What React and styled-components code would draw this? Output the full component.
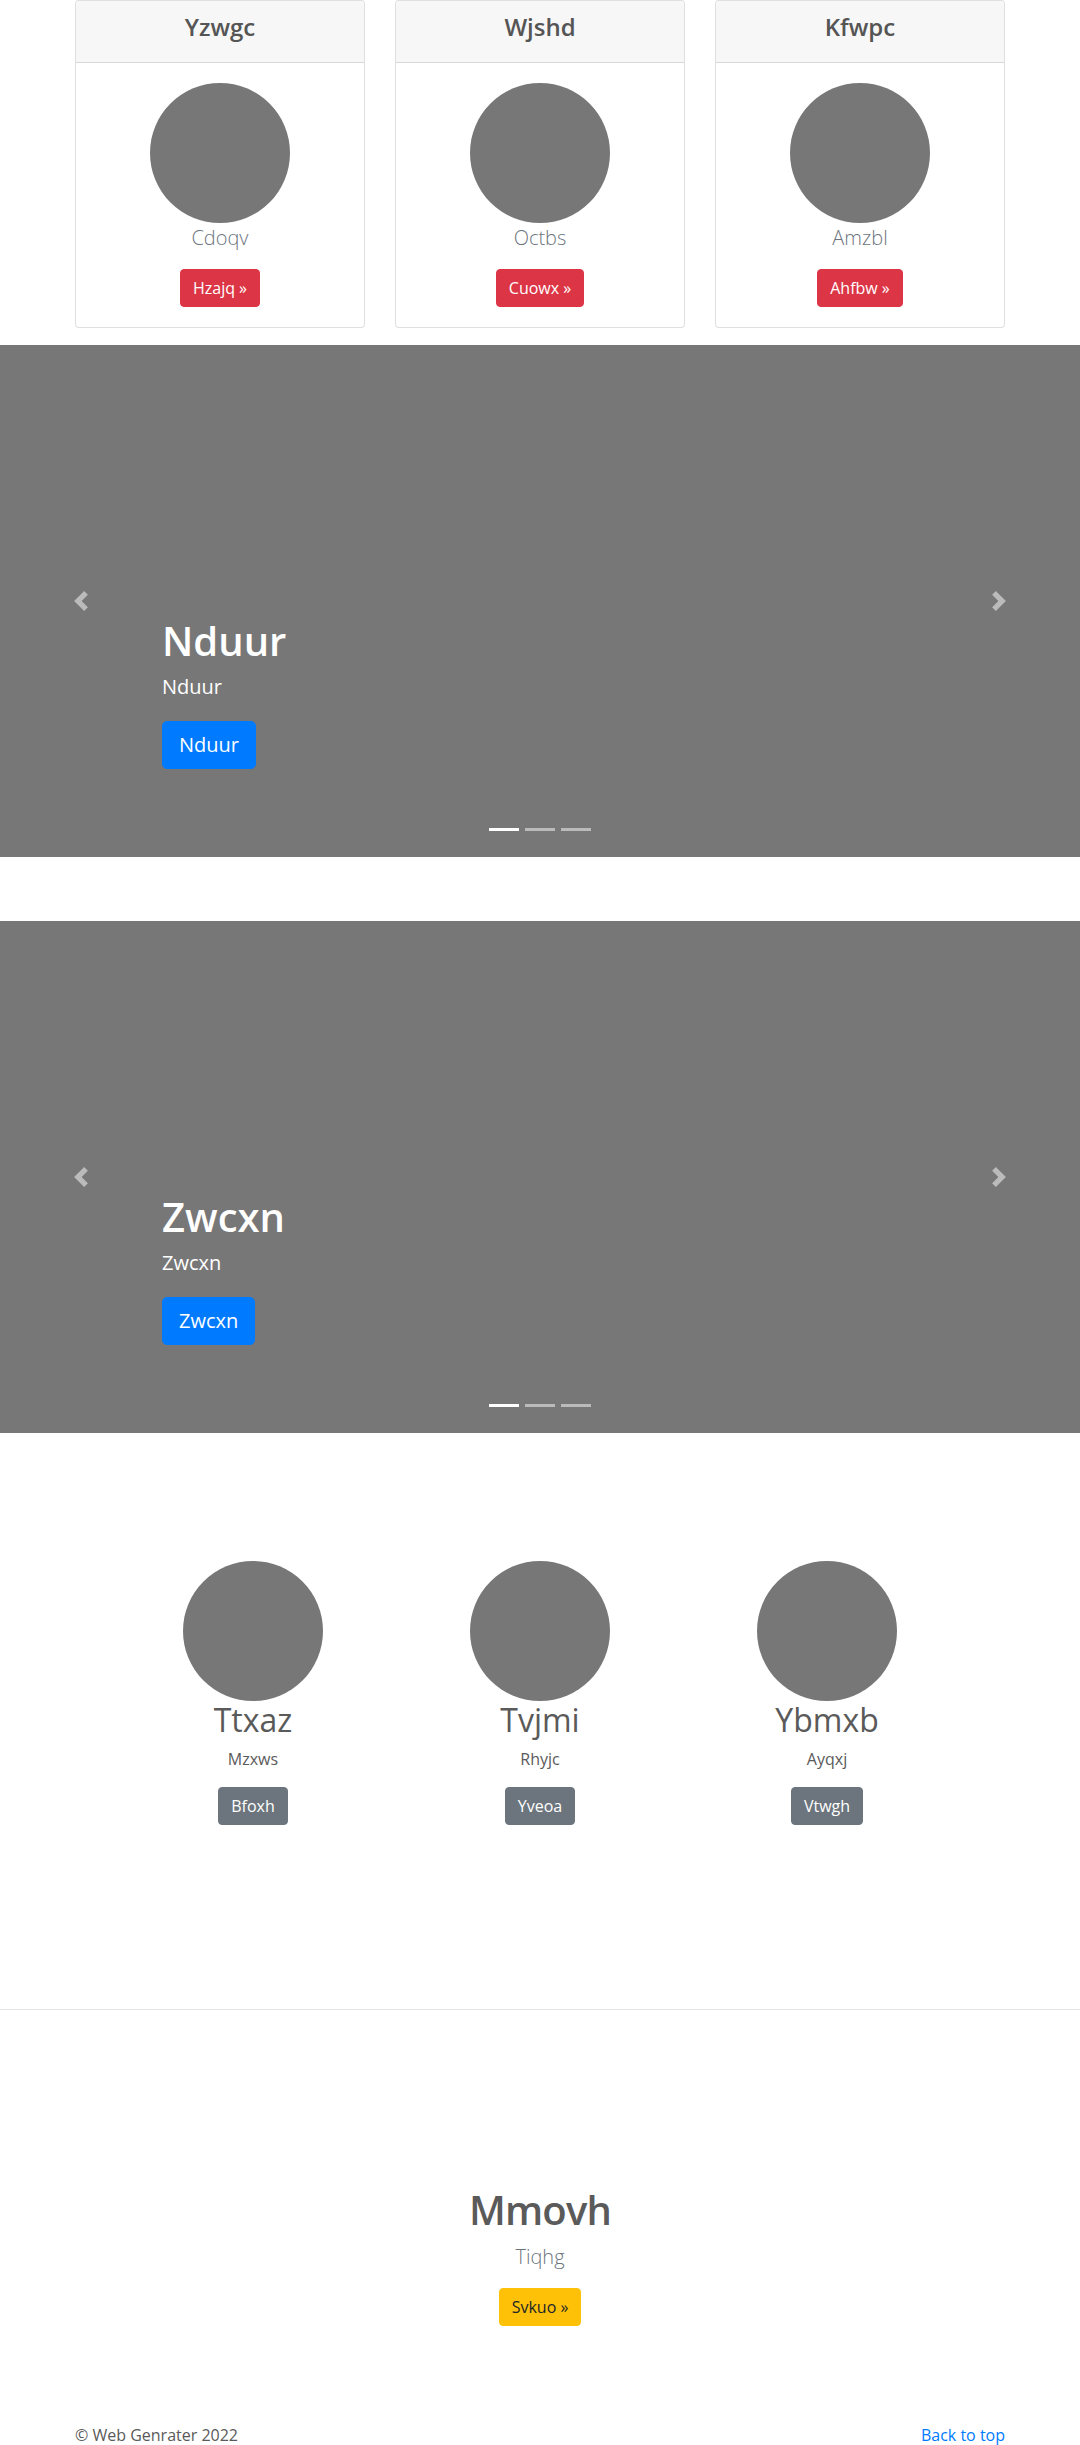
import styled, { createGlobalStyle, css } from "styled-components";

const GlobalStyle = createGlobalStyle`
  *, *::before, *::after { box-sizing: border-box; }
  body {
    margin: 0;
    font-family: "Open Sans", "Noto Sans", Arial, sans-serif;
    font-size: 16px;
    line-height: 1.5;
    color: #5a5a5a;
    background: #fff;
  }
  h1, h2, h3, h4, p { margin: 0; }
`;

const Container = styled.div`
  width: 960px;
  margin: 0 auto;
  padding: 0 15px;
`;

const CardRow = styled.div`
  display: grid;
  grid-template-columns: repeat(3, 290px);
  gap: 30px;
  padding-bottom: 17px;
`;

const Card = styled.div`
  border: 1px solid rgba(0, 0, 0, 0.125);
  border-radius: 4px;
  background: #fff;
  overflow: hidden;
`;

const CardHeader = styled.div`
  background: #f7f7f7;
  border-bottom: 1px solid rgba(0, 0, 0, 0.125);
  padding: 12px 20px 20px;
  text-align: center;

  h4 {
    font-size: 24px;
    font-weight: 600;
    line-height: 1.2;
    color: #555;
  }
`;

const CardBody = styled.div`
  padding: 20px;
  display: flex;
  flex-direction: column;
  align-items: center;
`;

const Avatar = styled.div`
  width: 140px;
  height: 140px;
  border-radius: 50%;
  background: #777;
  flex-shrink: 0;
`;

const Lead = styled.p`
  font-size: 20px;
  font-weight: 300;
  line-height: 1.5;
  color: #6c757d;
  margin-bottom: 16px;
`;

const variants = {
  danger: css`background: #dc3545; border-color: #dc3545; color: #fff;`,
  primary: css`background: #007bff; border-color: #007bff; color: #fff;`,
  secondary: css`background: #6c757d; border-color: #6c757d; color: #fff;`,
  warning: css`background: #ffc107; border-color: #ffc107; color: #212529;`,
};

const Button = styled.a`
  display: inline-block;
  font-family: inherit;
  font-size: ${(p) => (p.$lg ? "20px" : "16px")};
  line-height: 1.5;
  padding: ${(p) => (p.$lg ? "8px 16px" : "6px 12px")};
  border: 1px solid transparent;
  border-radius: ${(p) => (p.$lg ? "5px" : "4px")};
  text-decoration: none;
  white-space: nowrap;
  cursor: pointer;
  ${(p) => variants[p.$variant]}
`;

const Carousel = styled.div`
  position: relative;
  height: 512px;
  background: #777;
  margin-bottom: 64px;
  overflow: hidden;
`;

const Control = styled.a`
  position: absolute;
  top: 0;
  bottom: 0;
  ${(p) => (p.$side === "prev" ? "left: 0;" : "right: 0;")}
  width: 15%;
  display: flex;
  align-items: center;
  justify-content: center;
  opacity: 0.5;
  cursor: pointer;
`;

const Indicators = styled.ol`
  position: absolute;
  left: 0;
  right: 0;
  bottom: 26px;
  margin: 0;
  padding: 0;
  list-style: none;
  display: flex;
  justify-content: center;
  gap: 6px;
`;

const Indicator = styled.li`
  width: 30px;
  height: 3px;
  background: ${(p) => (p.$active ? "#fff" : "rgba(255,255,255,0.5)")};
`;

const Caption = styled.div`
  position: absolute;
  left: 15%;
  right: 15%;
  bottom: 48px;
  padding: 20px 0;
  color: #fff;
  display: flex;
  flex-direction: column;
  align-items: flex-start;

  h1 {
    font-size: 40px;
    font-weight: 600;
    line-height: 1.2;
    margin-bottom: 8px;
  }

  p {
    font-size: 20px;
    line-height: 1.4;
    margin-bottom: 20px;
  }

  a {
    margin-bottom: 20px;
  }
`;

const Marketing = styled.div`
  width: 861px;
  margin: 0 auto;
  padding-top: 64px;
  display: grid;
  grid-template-columns: repeat(3, 1fr);
`;

const Feature = styled.div`
  display: flex;
  flex-direction: column;
  align-items: center;
  text-align: center;
  margin-bottom: 24px;

  h2 {
    font-size: 32px;
    font-weight: 400;
    line-height: 1.2;
    margin-bottom: 8px;
  }

  p {
    margin: 0 12px 16px;
  }
`;

const Divider = styled.hr`
  border: 0;
  border-top: 1px solid rgba(0, 0, 0, 0.1);
  margin: 160px 0 180px;
`;

const Featurette = styled.div`
  display: flex;
  flex-direction: column;
  align-items: center;
  text-align: center;

  h2 {
    font-size: 40px;
    font-weight: 600;
    line-height: 1;
    letter-spacing: -0.8px;
    margin-bottom: 12px;
  }
`;

const Footer = styled.footer`
  display: flex;
  justify-content: space-between;
  padding-top: 97px;

  a {
    color: #007bff;
    text-decoration: none;
  }
`;

const Chevron = ({ dir }) => (
  <svg width="20" height="20" viewBox="0 0 8 8" fill="#fff">
    <path
      d={
        dir === "prev"
          ? "M5.25 0l-4 4 4 4 1.5-1.5L4.25 4l2.5-2.5L5.25 0z"
          : "M2.75 0l-1.5 1.5L3.75 4l-2.5 2.5L2.75 8l4-4-4-4z"
      }
    />
  </svg>
);

const pricing = [
  { title: "Yzwgc", text: "Cdoqv", cta: "Hzajq" },
  { title: "Wjshd", text: "Octbs", cta: "Cuowx" },
  { title: "Kfwpc", text: "Amzbl", cta: "Ahfbw" },
];

const features = [
  { title: "Ttxaz", text: "Mzxws", cta: "Bfoxh" },
  { title: "Tvjmi", text: "Rhyjc", cta: "Yveoa" },
  { title: "Ybmxb", text: "Ayqxj", cta: "Vtwgh" },
];

function Slide({ label }) {
  return (
    <Carousel>
      <Indicators>
        <Indicator $active />
        <Indicator />
        <Indicator />
      </Indicators>
      <Caption>
        <h1>{label}</h1>
        <p>{label}</p>
        <Button $variant="primary" $lg>
          {label}
        </Button>
      </Caption>
      <Control $side="prev">
        <Chevron dir="prev" />
      </Control>
      <Control $side="next">
        <Chevron dir="next" />
      </Control>
    </Carousel>
  );
}

export default function App() {
  return (
    <>
      <GlobalStyle />
      <Container>
        <CardRow>
          {pricing.map((item) => (
            <Card key={item.title}>
              <CardHeader>
                <h4>{item.title}</h4>
              </CardHeader>
              <CardBody>
                <Avatar />
                <Lead>{item.text}</Lead>
                <Button $variant="danger">{item.cta} &raquo;</Button>
              </CardBody>
            </Card>
          ))}
        </CardRow>
      </Container>

      <Slide label="Nduur" />
      <Slide label="Zwcxn" />

      <Marketing>
        {features.map((item) => (
          <Feature key={item.title}>
            <Avatar />
            <h2>{item.title}</h2>
            <p>{item.text}</p>
            <Button $variant="secondary">{item.cta}</Button>
          </Feature>
        ))}
      </Marketing>

      <Divider />

      <Container>
        <Featurette>
          <h2>Mmovh</h2>
          <Lead>Tiqhg</Lead>
          <Button $variant="warning">Svkuo &raquo;</Button>
        </Featurette>
        <Footer>
          <p>&copy; Web Genrater 2022</p>
          <a href="#top">Back to top</a>
        </Footer>
      </Container>
    </>
  );
}
